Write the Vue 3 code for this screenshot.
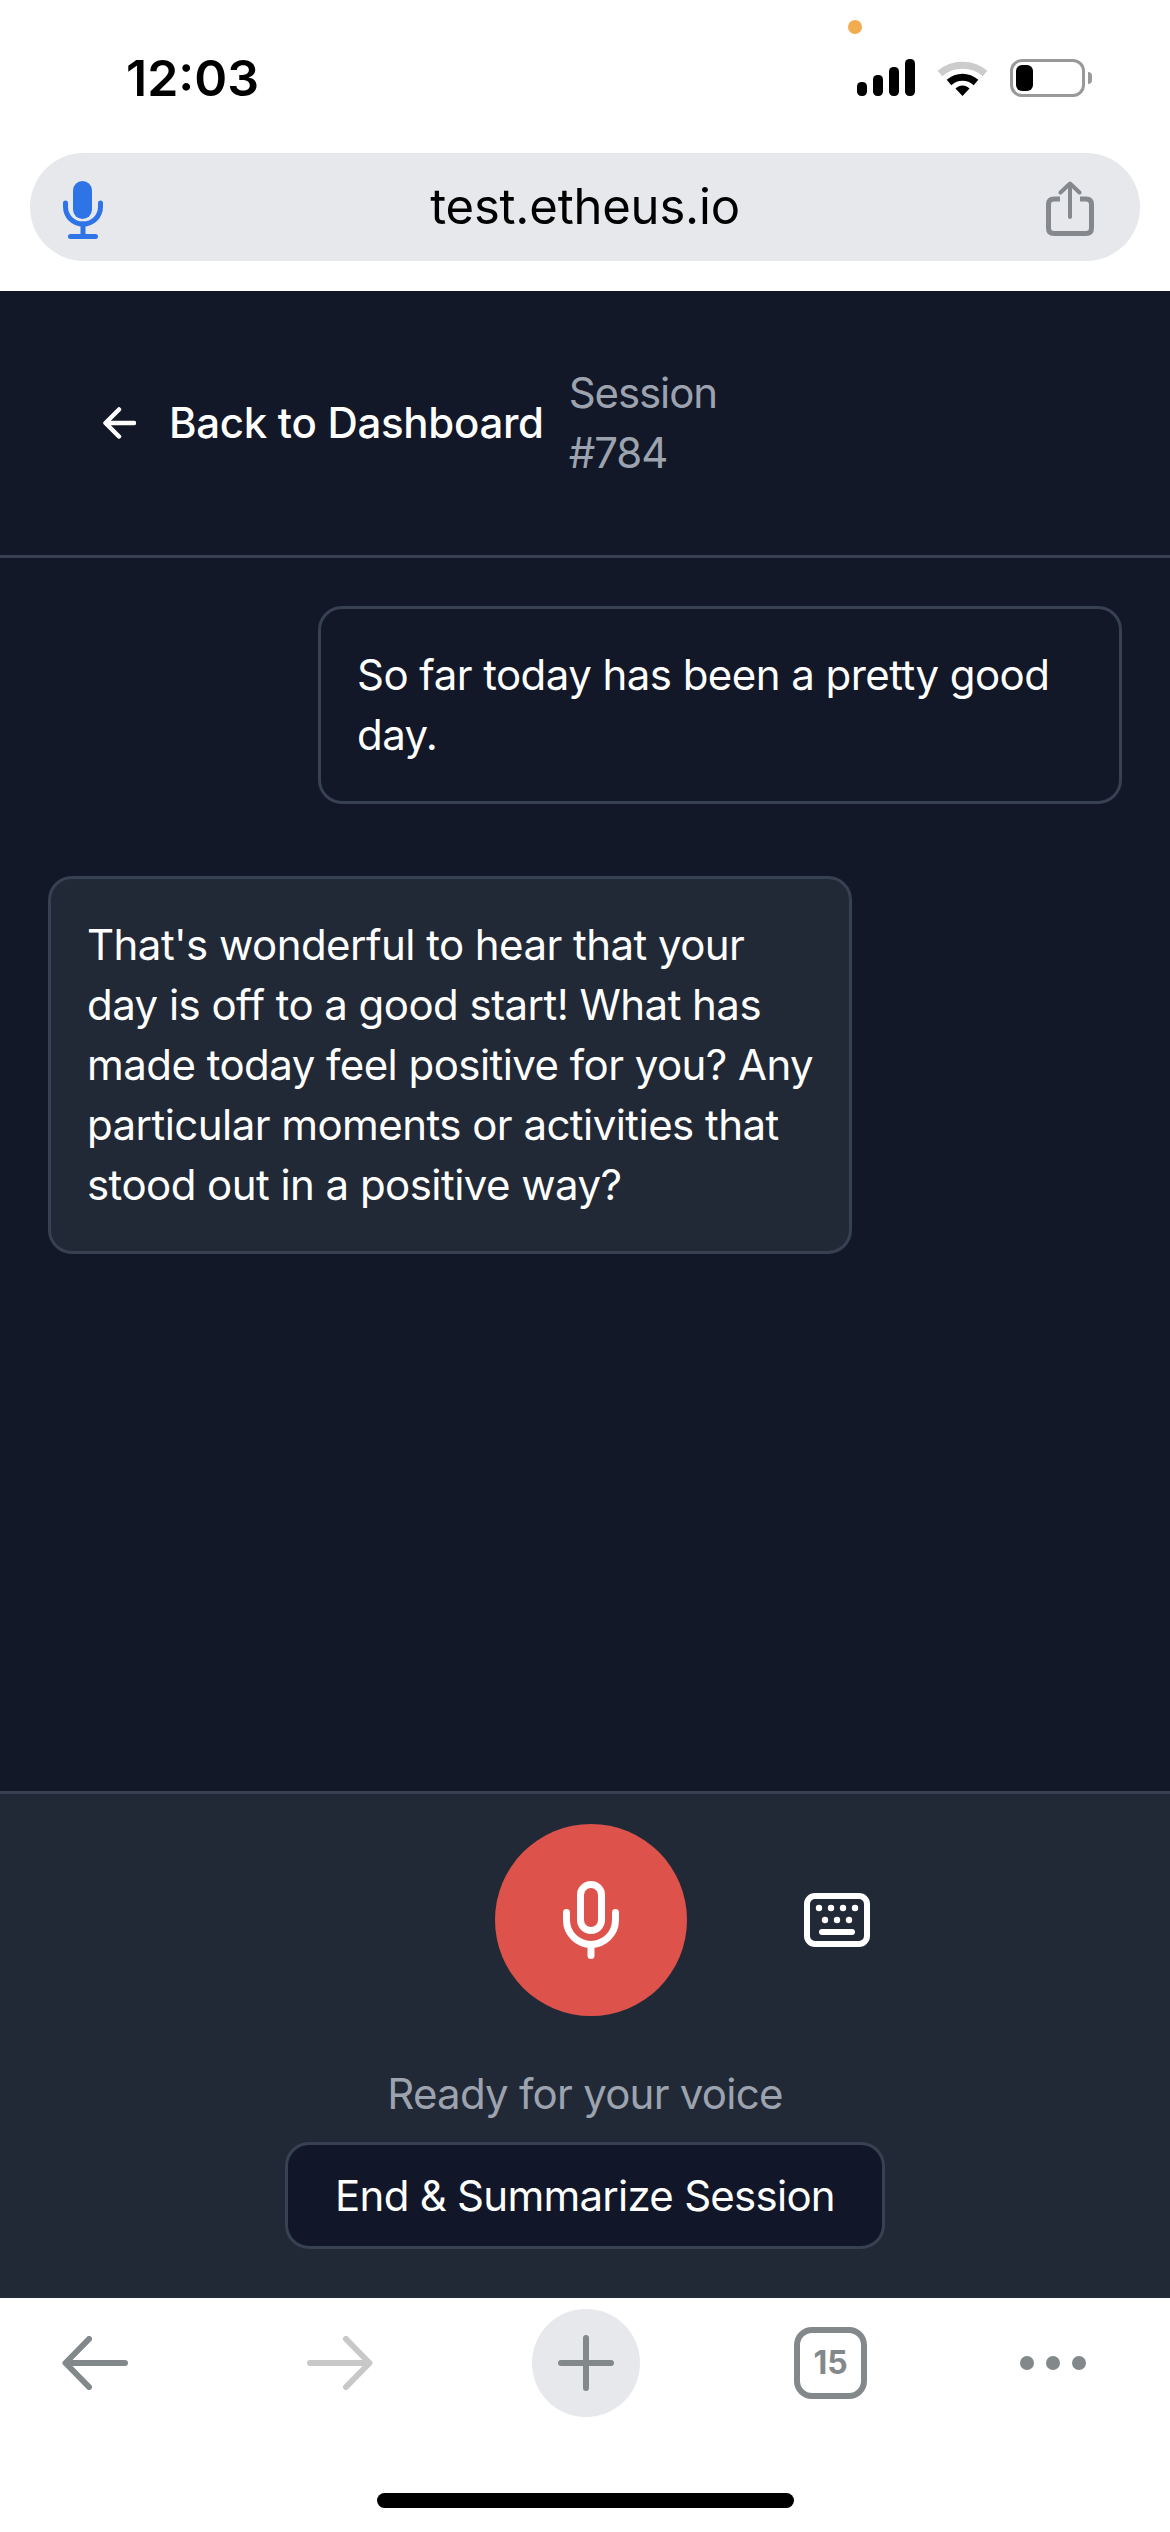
<template>
<div class="phone">
  <div class="top">
    <span class="rec-dot"></span>
    <div class="status">
      <span class="time">12:03</span>
      <div class="status-icons">
        <svg width="58" height="37" viewBox="0 0 58 37">
          <rect x="0" y="23" width="10" height="14" rx="4.5" />
          <rect x="16" y="16" width="10" height="21" rx="4.5" />
          <rect x="32" y="8" width="10" height="29" rx="4.5" />
          <rect x="48" y="0" width="10" height="37" rx="4.5" />
        </svg>
        <svg width="51" height="37" viewBox="0 0 51 37">
          <path d="M3 14.5C15.500 3.500 35.500 3.500 48 14.500" fill="none" stroke="#cccccc" stroke-width="7" />
          <path d="M12 23.500C20 16.500 31 16.500 39 23.500" fill="none" stroke="#000" stroke-width="7" />
          <path d="M18.500 29.500C22.500 25.500 28.500 25.500 32.500 29.500L25.500 37Z" fill="#000" />
        </svg>
        <div class="battery"><span class="battery-level"></span></div>
      </div>
    </div>
    <div class="url-bar">
      <svg class="url-mic" width="40" height="58" viewBox="0 0 40 58">
        <rect x="10" y="0" width="19" height="38" rx="9.500" fill="#2f74e6" />
        <path d="M2.500 22V25.500C2.500 35.500 10 43 20 43C30 43 37.500 35.500 37.500 25.500V22" fill="none" stroke="#2f74e6" stroke-width="5" stroke-linecap="round" />
        <path d="M20 43V55.500M7.500 55.500H32.500" fill="none" stroke="#2f74e6" stroke-width="5" stroke-linecap="round" />
      </svg>
      <span class="url">test.etheus.io</span>
      <svg class="url-share" width="48" height="55" viewBox="0 0 48 55">
        <path d="M14 18H8C4.500 18 2.500 20 2.500 23.500V47C2.500 50.500 4.500 52.500 8 52.500H40C43.500 52.500 45.500 50.500 45.500 47V23.500C45.500 20 43.500 18 40 18H34" fill="none" stroke="#85898d" stroke-width="5" />
        <path d="M24 36V3M14.500 11.500L24 2.500L33.500 11.500" fill="none" stroke="#85898d" stroke-width="4" stroke-linecap="round" stroke-linejoin="round" />
      </svg>
    </div>
  </div>

  <div class="app">
    <header class="header">
      <a class="back">
        <svg width="33" height="32" viewBox="0 0 33 32">
          <path d="M31 16H3M16 2.500L2.500 16L16 29.500" fill="none" stroke="#fff" stroke-width="4.500" stroke-linecap="round" stroke-linejoin="round" />
        </svg>
        Back to Dashboard
      </a>
      <span class="session">Session #{{ sessionId }}</span>
    </header>

    <main class="chat">
      <div v-for="m in messages" :key="m.id" class="msg" :class="m.role">{{ m.text }}</div>
    </main>

    <section class="panel">
      <div class="voice-row">
        <button class="mic-btn">
          <svg width="60" height="84" viewBox="0 0 60 84" fill="none" stroke="#fff" stroke-width="7" stroke-linecap="round">
            <rect x="19.500" y="6.500" width="21" height="46" rx="10.500" />
            <path d="M5.500 34.500V42a24.500 24.500 0 0 0 49 0v-7.500" />
            <path d="M30 66.500V77.500" />
          </svg>
        </button>
        <svg class="keyboard" width="66" height="54" viewBox="0 0 66 54">
          <rect x="3" y="3" width="60" height="48" rx="8" fill="none" stroke="#fff" stroke-width="6" />
          <circle v-for="x in [15, 27, 39, 51]" :key="x" :cx="x" cy="15" r="3.200" fill="#fff" />
          <circle v-for="x in [21, 33, 45]" :key="x" :cx="x" cy="27" r="3.200" fill="#fff" />
          <path d="M18 39H48" stroke="#fff" stroke-width="6" stroke-linecap="round" />
        </svg>
      </div>
      <p class="hint">Ready for your voice</p>
      <button class="end-btn">End &amp; Summarize Session</button>
    </section>
  </div>

  <footer class="bottom">
    <div class="toolbar">
      <svg width="66" height="54" viewBox="0 0 66 54">
        <path d="M63 27H4M27 3L3.500 27L27 51" fill="none" stroke="#83888b" stroke-width="6" stroke-linecap="round" stroke-linejoin="round" />
      </svg>
      <svg class="t-forward" width="66" height="54" viewBox="0 0 66 54">
        <path d="M3 27H62M39 3L62.500 27L39 51" fill="none" stroke="#c8c8c8" stroke-width="6" stroke-linecap="round" stroke-linejoin="round" />
      </svg>
      <div class="t-new">
        <svg width="56" height="56" viewBox="0 0 56 56">
          <path d="M28 3V53M3 28H53" fill="none" stroke="#83888b" stroke-width="6" stroke-linecap="round" />
        </svg>
      </div>
      <div class="t-tabs">15</div>
      <div class="t-more"><span></span><span></span><span></span></div>
    </div>
    <div class="home-bar"></div>
  </footer>
</div>
</template>

<script setup>
const sessionId = 784

const messages = [
  { id: 1, role: 'user', text: 'So far today has been a pretty good day.' },
  { id: 2, role: 'bot', text: "That's wonderful to hear that your day is off to a good start! What has made today feel positive for you? Any particular moments or activities that stood out in a positive way?" }
]
</script>

<style>
html, body {
  margin: 0;
  background: #fff;
}
</style>

<style scoped>
.phone {
  position: relative;
  width: 1170px;
  height: 2532px;
  display: flex;
  flex-direction: column;
  font-family: Inter, "Liberation Sans", sans-serif;
  font-size: 42px;
  line-height: 60px;
  overflow: hidden;
}

.top {
  background: #fff;
  padding: 59px 30px 30px;
}

.rec-dot {
  position: absolute;
  left: 848px;
  top: 20px;
  width: 14px;
  height: 14px;
  border-radius: 50%;
  background: #f2ac4f;
}

.status {
  height: 37px;
  margin-bottom: 57px;
  display: flex;
  align-items: center;
  justify-content: space-between;
  padding: 0 55px 0 96px;
}

.time {
  font-size: 50px;
  font-weight: 600;
  line-height: 37px;
  color: #000;
  margin-top: 2px;
}

.status-icons {
  display: flex;
  align-items: center;
  gap: 22px;
}

.battery {
  position: relative;
  box-sizing: border-box;
  width: 75px;
  height: 38px;
  border: 3px solid #999;
  border-radius: 12px;
  padding: 3px;
}

.battery::after {
  content: "";
  position: absolute;
  right: -10px;
  top: 10px;
  width: 4px;
  height: 12px;
  background: #999;
  border-radius: 0 4px 4px 0;
}

.battery-level {
  display: block;
  width: 17px;
  height: 26px;
  background: #000;
  border-radius: 6px;
}

.url-bar {
  height: 108px;
  border-radius: 54px;
  background: #e7e8ec;
  display: grid;
  grid-template-columns: 1fr auto 1fr;
  align-items: center;
  padding: 0 46px 0 33px;
}

.url {
  font-size: 49px;
  color: #000;
  line-height: 60px;
  letter-spacing: -0.2px;
  margin-left: 13px;
}

.url-mic {
  margin-top: 6px;
}

.url-share {
  margin-top: 2px;
  justify-self: end;
}

.app {
  flex: 1;
  display: flex;
  flex-direction: column;
  min-height: 0;
  background: #121827;
}

.header {
  display: flex;
  align-items: center;
  gap: 25px;
  padding: 72px 48px 72px 103px;
  border-bottom: 3px solid #374151;
}

.back {
  display: flex;
  align-items: center;
  gap: 33px;
  color: #fff;
  font-weight: 500;
  letter-spacing: -0.3px;
}

.session {
  width: min-content;
  color: #9ca3af;
  letter-spacing: -1.1px;
}

.chat {
  flex: 1;
  display: flex;
  flex-direction: column;
  gap: 72px;
  padding: 48px;
}

.msg {
  box-sizing: border-box;
  width: 804px;
  padding: 36px 30px 36px 36px;
  border: 3px solid #374151;
  border-radius: 24px;
  color: #fff;
  letter-spacing: -0.55px;
}

.msg.user {
  align-self: flex-end;
}

.msg.bot {
  background: #222936;
}

.panel {
  display: flex;
  flex-direction: column;
  align-items: center;
  background: #222936;
  border-top: 3px solid #374151;
  padding: 30px 0 49px;
}

.voice-row {
  width: 100%;
  padding-left: 12px;
  box-sizing: border-box;
  display: grid;
  grid-template-columns: 1fr 192px 1fr;
  align-items: center;
}

.mic-btn {
  grid-column: 2;
  width: 192px;
  height: 192px;
  padding: 0;
  border: 0;
  border-radius: 50%;
  background: #dd534c;
  display: flex;
  align-items: center;
  justify-content: center;
}

.keyboard {
  margin-left: 117px;
}

.hint {
  margin: 48px 0 18px;
  color: #9ca3af;
  letter-spacing: -0.75px;
}

.end-btn {
  box-sizing: border-box;
  width: 600px;
  height: 107px;
  border: 3px solid #374151;
  border-radius: 24px;
  background: #111729;
  color: #fff;
  font: inherit;
  letter-spacing: -0.74px;
  padding: 0;
}

.bottom {
  background: #fff;
  padding: 11px 0 24px;
}

.toolbar {
  height: 108px;
  display: flex;
  align-items: center;
  gap: 154px;
  padding-left: 62px;
}

.t-forward {
  margin-left: 25px;
}

.t-new {
  width: 108px;
  height: 108px;
  margin-left: 5px;
  border-radius: 50%;
  background: #e7e8ec;
  display: flex;
  align-items: center;
  justify-content: center;
}

.t-tabs {
  box-sizing: border-box;
  width: 73px;
  height: 72px;
  border: 6px solid #83888b;
  border-radius: 18px;
  color: #83888b;
  font-size: 32px;
  font-weight: 700;
  line-height: 60px;
  text-align: center;
}

.t-more {
  display: flex;
  gap: 12px;
  margin-left: -1px;
}

.t-more span {
  width: 14px;
  height: 14px;
  border-radius: 50%;
  background: #83888b;
}

.home-bar {
  width: 417px;
  height: 15px;
  margin: 76px auto 0;
  border-radius: 8px;
  background: #000;
}
</style>
